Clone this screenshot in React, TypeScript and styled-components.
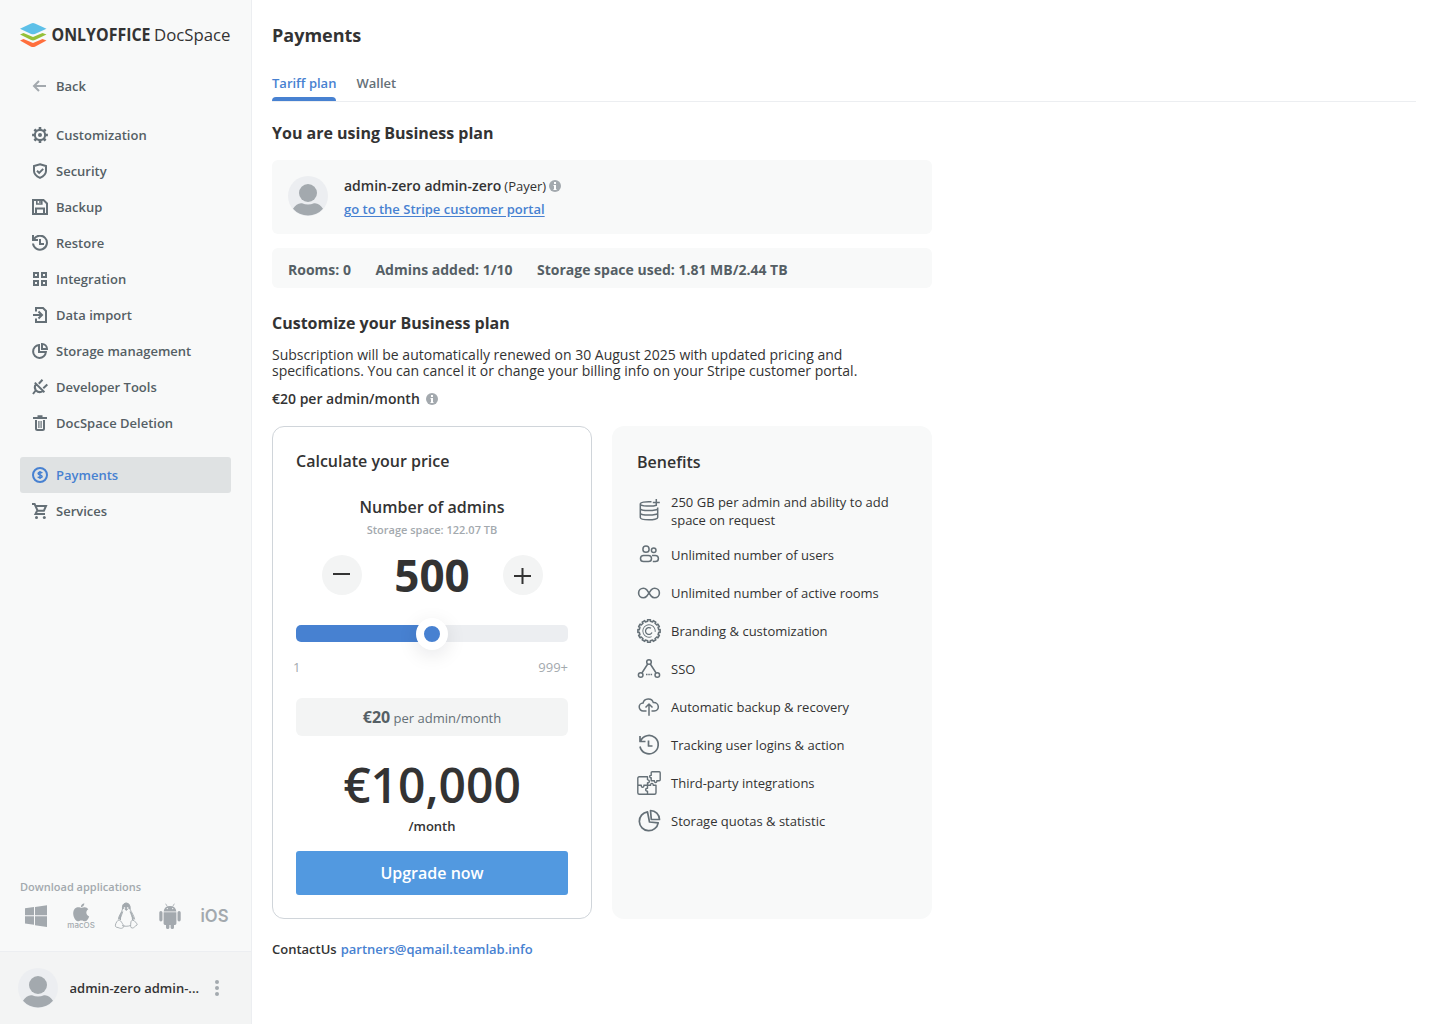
import React from "react";
import styled, { createGlobalStyle } from "styled-components";

const GlobalStyle = createGlobalStyle`
  *, *::before, *::after { box-sizing: border-box; }
  body {
    margin: 0;
    font-family: "Open Sans", sans-serif;
    font-size: 13px;
    color: #333;
    background: #fff;
  }
  h1, h2, h3, p { margin: 0; }
  button { font-family: inherit; border: 0; padding: 0; cursor: pointer; }
  a { color: #4781d1; }
  svg { display: block; flex: none; }
`;

/* ---------- layout ---------- */

const Page = styled.div`
  display: flex;
  width: 100%;
  height: 1024px;
  overflow: hidden;
`;

const Sidebar = styled.aside`
  display: flex;
  flex-direction: column;
  flex: none;
  width: 252px;
  background: #f8f9f9;
  border-right: 1px solid #eceef1;
`;

const LogoLink = styled.div`
  height: 28px;
  margin: 21px 20px 0;
  svg { overflow: visible; }
`;

const Nav = styled.nav`
  display: flex;
  flex-direction: column;
  flex: 1;
  padding: 19px 20px 0;
`;

const NavItem = styled.div<{ $active?: boolean; $before?: number }>`
  display: flex;
  align-items: center;
  gap: 8px;
  height: 36px;
  margin-top: ${(p) => p.$before ?? 0}px;
  padding: 0 12px;
  border-radius: 3px;
  font-weight: 600;
  line-height: 20px;
  color: ${(p) => (p.$active ? "#4781d1" : "#555f65")};
  background: ${(p) => (p.$active ? "#dfe2e3" : "transparent")};
  svg { color: ${(p) => (p.$active ? "#4781d1" : "#657077")}; }
`;

const Downloads = styled.section`
  padding: 0 20px 19px;
  color: #a3a9ae;
`;

const DownloadTitle = styled.div`
  font-size: 11px;
  font-weight: 600;
  line-height: 16px;
`;

const AppRow = styled.div`
  display: flex;
  justify-content: space-between;
  height: 32px;
  margin: 5px 0 0 0;
  align-items: center;
`;

const Profile = styled.footer`
  display: flex;
  align-items: center;
  height: 73px;
  padding: 0 18px;
  border-top: 1px solid #eceef1;
  background: #f3f4f4;
`;

const ProfileName = styled.div`
  width: 131px;
  margin: 0 14.500px 0 11.500px;
  overflow: hidden;
  white-space: nowrap;
  font-weight: 600;
  line-height: 20px;
`;

const Main = styled.main`
  flex: 1;
  padding: 0 24px 0 20px;
`;

const PageTitle = styled.h1`
  margin-top: 23px;
  font-size: 18px;
  font-weight: 700;
  line-height: 24px;
`;

const Tabs = styled.div`
  display: flex;
  gap: 20px;
  height: 33px;
  margin-top: 22px;
  padding-top: 4px;
  border-bottom: 1px solid #eceef1;
`;

const Tab = styled.div<{ $active?: boolean }>`
  height: 28px;
  margin-bottom: -1px;
  display: flex;
  flex-direction: column;
  justify-content: space-between;
  font-weight: 600;
  line-height: 20px;
  color: ${(p) => (p.$active ? "#4781d1" : "#657077")};
  &::after {
    content: "";
    height: 4px;
    border-radius: 4px 4px 0 0;
    background: ${(p) => (p.$active ? "#4781d1" : "transparent")};
  }
`;

const Content = styled.div`
  width: 660px;
`;

const SectionTitle = styled.h2<{ $before: number }>`
  margin-top: ${(p) => p.$before}px;
  font-size: 16px;
  font-weight: 700;
  line-height: 22px;
`;

const PayerCard = styled.section`
  display: flex;
  gap: 16px;
  height: 74px;
  margin-top: 16px;
  padding: 16px;
  border-radius: 6px;
  background: #f8f9f9;
`;

const PayerInfo = styled.div`
  display: flex;
  flex-direction: column;
  gap: 3px;
`;

const PayerLine = styled.div`
  display: flex;
  align-items: center;
  height: 20px;
  line-height: 20px;
  strong { font-size: 14px; font-weight: 600; }
  span { margin-left: 3px; }
  svg { margin-left: 2.500px; }
`;

const PortalLink = styled.a`
  font-weight: 600;
  line-height: 20px;
  text-decoration: underline;
  text-underline-offset: 2px;
`;

const Stats = styled.section`
  display: flex;
  align-items: center;
  gap: 24.500px;
  height: 40px;
  margin-top: 14px;
  padding: 3px 16px 0;
  border-radius: 6px;
  background: #f8f9f9;
  color: #555f65;
  font-size: 14px;
  font-weight: 700;
`;

const Renewal = styled.p`
  margin-top: 13px;
  font-size: 14px;
  line-height: 16px;
`;

const UnitPrice = styled.div`
  display: flex;
  align-items: center;
  gap: 6px;
  height: 20px;
  margin-top: 10px;
  font-size: 14px;
  font-weight: 600;
  line-height: 19px;
  span { height: 20px; }
`;

const Panels = styled.div`
  display: grid;
  grid-template-columns: 320px 320px;
  gap: 20px;
  height: 493px;
  margin-top: 17px;
`;

const Calculator = styled.section`
  display: flex;
  flex-direction: column;
  padding: 23px;
  border: 1px solid #d0d5da;
  border-radius: 12px;
`;

const PanelTitle = styled.h3`
  font-size: 16px;
  font-weight: 600;
  line-height: 22px;
`;

const CounterTitle = styled(PanelTitle)`
  margin-top: 24px;
  text-align: center;
`;

const StorageNote = styled.div`
  margin-top: 4px;
  font-size: 11px;
  font-weight: 600;
  line-height: 16px;
  text-align: center;
  color: #a3a9ae;
`;

const Counter = styled.div`
  display: flex;
  align-items: center;
  justify-content: space-between;
  height: 40px;
  margin-top: 17px;
  padding: 0 25px 0 26px;
`;

const RoundButton = styled.button`
  display: flex;
  align-items: center;
  justify-content: center;
  width: 40px;
  height: 40px;
  border-radius: 50%;
  background: #f3f4f4;
  color: #333;
`;

const Count = styled.div`
  margin-right: 1px;
  font-size: 44px;
  font-weight: 700;
  line-height: 40px;
`;

const Slider = styled.div<{ $fill: number }>`
  display: flex;
  align-items: center;
  justify-content: center;
  height: 17px;
  margin-top: 30px;
  border-radius: 5px;
  background: linear-gradient(to right, #4781d1 ${(p) => p.$fill}%, #eceef1 ${(p) => p.$fill}%);
`;

const Thumb = styled.div`
  flex: none;
  width: 32px;
  height: 32px;
  border: 8px solid #fff;
  border-radius: 50%;
  background: #4781d1;
  box-shadow: 0 5px 20px rgba(4, 15, 27, 0.1);
`;

const Range = styled.div`
  display: flex;
  justify-content: space-between;
  margin: 15px 0 0 -3px;
  line-height: 20px;
  color: #a3a9ae;
`;

const PerAdmin = styled.div`
  height: 38px;
  margin-top: 21px;
  border-radius: 6px;
  background: #f3f4f4;
  text-align: center;
  line-height: 38px;
  color: #657077;
  strong { font-size: 16px; color: #555f65; }
`;

const Total = styled.div`
  margin-top: 17px;
  font-size: 48px;
  font-weight: 600;
  line-height: 64px;
  text-align: center;
`;

const Period = styled.div`
  font-weight: 600;
  line-height: 18px;
  text-align: center;
`;

const UpgradeButton = styled.button`
  height: 44px;
  margin-top: 16px;
  border-radius: 3px;
  background: #5299e0;
  color: #fff;
  font-size: 16px;
  font-weight: 600;
`;

const Benefits = styled.section`
  padding: 25px;
  border-radius: 12px;
  background: #f8f9f9;
`;

const BenefitList = styled.div`
  display: flex;
  flex-direction: column;
  gap: 14px;
  margin-top: 20px;
`;

const Benefit = styled.div`
  display: flex;
  align-items: center;
  gap: 10px;
  min-height: 24px;
  line-height: 18px;
  svg { color: #657077; }
`;

const Contact = styled.div`
  display: flex;
  gap: 4px;
  margin-top: 20px;
  font-weight: 600;
  line-height: 20px;
`;

/* ---------- icons ---------- */

const NavIcon = ({ children }: { children: React.ReactNode }) => (
  <svg width="16" height="16" viewBox="0 0 16 16" fill="none" stroke="currentColor" strokeWidth="2">
    {children}
  </svg>
);

const BenefitIcon = ({ children, width = 1.5 }: { children: React.ReactNode; width?: number }) => (
  <svg width="24" height="24" viewBox="0 0 24 24" fill="none" stroke="currentColor" strokeWidth={width} strokeLinejoin="round">
    {children}
  </svg>
);

const InfoIcon = () => (
  <svg width="12" height="12" viewBox="0 0 12 12">
    <circle cx="6" cy="6" r="6" fill="#a3a9ae" />
    <path d="M5 2h2v2H5zM4.500 5H7v4h.5v1h-3V9H5V6h-.5z" fill="#fff" />
  </svg>
);

const Avatar = () => (
  <svg width="40" height="40" viewBox="0 0 40 40">
    <circle cx="20" cy="20" r="20" fill="#eceef1" />
    <circle cx="20" cy="17" r="9" fill="#a3a9ae" />
    <path d="M5 32.8C7.5 28.8 10.5 26.7 14 27.2c2 .8 4 1.3 6 1.3s4-.5 6-1.3c3.5-.5 6.500 1.600 9 5.600A20 20 0 0 1 5 32.800z" fill="#a3a9ae" />
  </svg>
);

const Logo = () => (
  <svg width="211" height="28" viewBox="0 0 211 28" fontFamily="Open Sans, sans-serif" fill="#333">
    <path d="M0 19.600 3.500 18l9.500 4 9.500-4 4 1.600-11.600 6.100q-1.900.8-3.800 0z" fill="#ff6f3d" />
    <path d="M0 13.600 3.500 12l9.500 4 9.500-4 4 1.600-11.600 5.500q-1.900.8-3.800 0z" fill="#95c038" />
    <path d="m0 7.700 11.100-5.200q1.900-.8 3.800 0L26.500 7.700l-11.600 5.200q-1.900.8-3.800 0z" fill="#5dc0e8" />
    <text x="31.500" y="20" fontSize="17.200" fontWeight="700" textLength="99" lengthAdjust="spacingAndGlyphs">ONLYOFFICE</text>
    <text x="134" y="20" fontSize="17.200" textLength="76.500" lengthAdjust="spacingAndGlyphs">DocSpace</text>
  </svg>
);

const gearPath = (teeth: number, outer: number, inner: number, c: number, base = 0.3, tip = 0.2) => {
  const pts: string[] = [];
  const step = (Math.PI * 2) / teeth;
  for (let i = 0; i < teeth; i++) {
    const a = i * step - Math.PI / 2;
    [[-base, inner], [-tip, outer], [tip, outer], [base, inner]].forEach(([o, r]) =>
      pts.push(`${(c + Math.cos(a + o * step) * r).toFixed(2)} ${(c + Math.sin(a + o * step) * r).toFixed(2)}`)
    );
  }
  return `M${pts.join("L")}Z`;
};

const navGlyphs = {
  back: <g stroke="#a3a9ae"><path d="M2 8h12M7 3 2 8l5 5" /></g>,
  gear: (
    <>
      <path d={gearPath(8, 8, 6.200, 8, 0.28, 0.2) + "M8 3.900a4.100 4.100 0 1 0 0 8.200 4.100 4.100 0 0 0 0-8.200z"} fill="currentColor" fillRule="evenodd" stroke="none" />
      <circle cx="8" cy="8" r="2" fill="currentColor" stroke="none" />
    </>
  ),
  shield: <><path d="M8 1.200 14 3v5c0 3-2.500 5.300-6 6.900C4.500 13.300 2 11 2 8V3z" /><path d="m5 7.700 2.200 2.200 4-4" /></>,
  floppy: <><path d="M1 1h10.500L15 4.500V15H1zM4 15V9.500h8V15" /><path d="M4.800 1v4h5V1M8 1v3" strokeWidth="1.600" /></>,
  history: <><path d="M1.800 4.300A7 7 0 1 1 1 8.500" /><path d="M1 0v5h5M8 4v5h4" /></>,
  grid: <path d="M2 2h4v4H2zM10 2h4v4h-4zM2 10h4v4H2zM10 10h4v4h-4z" />,
  dataImport: <><path d="M4 4.500V1h7l3 3v11H4v-3.500" /><path d="M1 8h8M6.500 4.500 10 8l-3.500 3.500" /></>,
  pie: <><path d="M7 2.100A6.400 6.400 0 1 0 13.900 9H7z" /><path d="M10 1v5h5A5 5 0 0 0 10 1z" /></>,
  plug: <><path d="m2.800 3.600 9.600 9.600M4 5c-1.700 2.300-1.600 4.200-.2 6.200C5.800 13.200 8.500 13.700 11 12M4 11l-3 4M6.800 4.800l3.700-4M11.300 9.300l4-3.800" /></>,
  trash: (
    <>
      <path d="M1 3h14M5.500 1.300h5M4 5v8.500Q4 15 5.500 15h5q1.500 0 1.500-1.500V5" />
      <path d="M6.900 6v7M9.100 6v7" strokeWidth="1.200" />
    </>
  ),
  dollar: (
    <>
      <circle cx="8" cy="8" r="7" />
      <path d="M10.200 6.100C9.800 5.200 6.100 4.800 6.100 6.600c0 1.700 4 1 4 2.800 0 1.900-3.900 1.400-4.300.3M8 4v8" strokeWidth="1.500" />
    </>
  ),
  cart: (
    <>
      <path d="M0 1h2.600l3 6.700h6.300L14 3H3.800M5 8l-1.500 3H13" />
      <circle cx="4.500" cy="14.500" r="1.500" fill="currentColor" stroke="none" />
      <circle cx="12.300" cy="14.500" r="1.500" fill="currentColor" stroke="none" />
    </>
  ),
};

const navItems: { label: string; icon: keyof typeof navGlyphs; active?: boolean; before?: number }[] = [
  { label: "Back", icon: "back" },
  { label: "Customization", icon: "gear", before: 13 },
  { label: "Security", icon: "shield" },
  { label: "Backup", icon: "floppy" },
  { label: "Restore", icon: "history" },
  { label: "Integration", icon: "grid" },
  { label: "Data import", icon: "dataImport" },
  { label: "Storage management", icon: "pie" },
  { label: "Developer Tools", icon: "plug" },
  { label: "DocSpace Deletion", icon: "trash" },
  { label: "Payments", icon: "dollar", active: true, before: 16 },
  { label: "Services", icon: "cart" },
];

const benefits: { text: string; icon: React.ReactNode }[] = [
  {
    text: "250 GB per admin and ability to add space on request",
    icon: (
      <BenefitIcon>
        <path d="M14.500 2.800C8 2.400 3.300 3.400 3.300 4.900c0 2.400 12 2.800 16 1.300M3.300 4.900v13.600c0 3 17.400 3 17.400 0V8.500M3.300 9.500c0 2.800 17.400 2.800 17.400 0M3.300 14c0 2.800 17.400 2.800 17.400 0M19.300 0v7M15.800 3.500h7" />
      </BenefitIcon>
    ),
  },
  {
    text: "Unlimited number of users",
    icon: (
      <BenefitIcon>
        <circle cx="9" cy="6.200" r="3.100" />
        <circle cx="16.700" cy="7.200" r="2.300" />
        <rect x="3.500" y="12.400" width="11" height="6.200" rx="3.100" />
        <path d="M15 12.400h3.300a3.100 3.100 0 0 1 0 6.200h-2.500" />
      </BenefitIcon>
    ),
  },
  {
    text: "Unlimited number of active rooms",
    icon: (
      <BenefitIcon width={1.6}>
        <path d="M12 12 9.800 8.900C8.700 7.700 7.700 7.200 6.400 7.200a4.800 4.800 0 0 0 0 9.600c1.300 0 2.300-.5 3.400-1.700l4.400-6.200c1.100-1.200 2.100-1.700 3.400-1.700a4.800 4.800 0 0 1 0 9.600c-1.300 0-2.300-.5-3.400-1.700z" />
      </BenefitIcon>
    ),
  },
  {
    text: "Branding & customization",
    icon: (
      <BenefitIcon width={1.5}>
        <path d={gearPath(12, 11.250, 9.800, 12, 0.25, 0.25)} />
        <circle cx="12" cy="12" r="6.200" strokeWidth=".9" strokeDasharray="32 7" transform="rotate(65 12 12)" />
        <path d="M14 9.300a3.400 3.400 0 1 0 1 4.200" strokeWidth="1.300" />
      </BenefitIcon>
    ),
  },
  {
    text: "SSO",
    icon: (
      <BenefitIcon>
        <circle cx="12" cy="5" r="2.300" />
        <circle cx="3.700" cy="18" r="2.300" />
        <circle cx="20.300" cy="18" r="2.300" />
        <path d="m10.700 7-5.800 9M13.300 7l5.800 9" />
        <path d="M9 17.500h1.500M11.300 17.500h1.500M13.600 17.500h1.500" strokeWidth="1.700" />
      </BenefitIcon>
    ),
  },
  {
    text: "Automatic backup & recovery",
    icon: (
      <BenefitIcon>
        <path d="M9.500 16H6.300a4 4 0 0 1-.2-8C7 2.900 15 2.300 16.300 7.600c6.300-.4 6.800 8.400.8 8.400h-2.600M12 20.800V9.300M8.500 12.500 12 9l3.500 3.500" />
      </BenefitIcon>
    ),
  },
  {
    text: "Tracking user logins & action",
    icon: (
      <BenefitIcon width={1.700}>
        <path d="M3.500 8.200A9.200 9.200 0 1 1 3 13.500M3 3v5.500h5.500M11.500 7.500V13h4" />
      </BenefitIcon>
    ),
  },
  {
    text: "Third-party integrations",
    icon: (
      <BenefitIcon width={1.400}>
        <path d="M14.200 3.200V1.700q0-1 1-1h7q1 0 1 1v7.100q0 1-1 1h-2.400c.3 2.200-2.700 2.200-2.400 0h-3.200V6.700c-2 .3-2-2.700 0-2.300z" />
        <path d="M10.500 9V5.800H2.300q-1.500 0-1.500 1.500v14.500q0 1.500 1.500 1.500H17.500q1.500 0 1.500-1.500V14.300h-2.800c.4-2.600-3-2.600-2.600 0h-3.100v-2.500c2.400.4 2.400-3.200 0-2.800" />
        <path d="M1 14.300h3.300c-.4 2.500 3 2.500 2.600 0h3.600v3c-2.400-.4-2.400 3.200 0 2.800v3.200" />
      </BenefitIcon>
    ),
  },
  {
    text: "Storage quotas & statistic",
    icon: (
      <BenefitIcon width={1.700}>
        <path d="M10.500 2.800a9.500 9.500 0 1 0 10.700 11L12.500 13z" />
        <path d="M13.500 1.500 14.300 10.500H22.500A9.200 9.200 0 0 0 13.500 1.500z" />
      </BenefitIcon>
    ),
  },
];

const DesktopApps = () => (
  <AppRow>
    <svg width="32" height="32" viewBox="0 0 32 32" fill="#a3a9ae">
      <path d="m5 8.300 9-1.300v8.300H5zM15 6.900 27 5.200v10.100H15zM5 16.300h9v8.400l-9-1.200zM15 16.300h12V27l-12-1.800z" />
    </svg>
    <svg width="32" height="32" viewBox="0 0 32 32" fill="#a3a9ae">
      <path d="M19.300 3.300c.2 2-1.600 4-3.400 3.900-.2-1.900 1.600-3.700 3.400-3.900zM23.300 9.200c-3 1.900-2.400 5.900.9 7.200-.8 2.200-2.400 4.900-4.100 4.900-1.500 0-2-.8-3.700-.8s-2.300.8-3.700.8c-2 0-4.500-4.300-4.500-7.700 0-6.200 4.500-6.900 6.100-6.300 2.600.9 2.500.7 4.700 0 1.700-.4 3.300.5 4.300 1.900z" />
      <text x="2.300" y="27.500" fontSize="7.500" fontFamily="Inter, sans-serif" fontWeight="500" textLength="27.500" lengthAdjust="spacingAndGlyphs">macOS</text>
    </svg>
    <svg width="32" height="32" viewBox="0 0 32 32" fill="none" stroke="#a3a9ae" strokeWidth=".9">
      <path d="M12.500 9C12 5 13.700 3.200 16.200 3.200S20.300 5 20 9c1.500 3.500 4 6.500 4.700 10.500M12.500 9C11.700 13 9 14.500 8.300 19.500M12.800 11.500C12 15 10 17 10.500 20M20 11.500c1 3 2.500 5 2.500 8.500M12 25.500c2 1 6 1 8.500 0" />
      <path d="M8.300 20.200c2.500-.7 3.500 3 5.500 5.300.2 3-3 3.200-4.500 2.500-1.700-.8-3.300-.5-3.800-1.500-.5-1.500.5-4.500 2.800-6.300zM24 20.500c-2.200-.5-3 0-3.200 2.500-.2 2.500-.8 5 1.500 5 2 0 2.200-1.700 4.700-3 .8-.8-.9-2.200-3-4.500z" />
      <path d="M12.500 9c0-4 1-5.800 3.800-5.800S20.200 5.500 20 9l-1.500-.8-2.200 2.300-2.200-2.300zM12 11.500 9 18l1.500 2M20.500 11.500l3.200 7-1 1.500" fill="#a3a9ae" />
      <path d="M13.800 7.200h1.400v1.500h-1.400zM16.900 7.200h1.500v1.500h-1.500z" fill="#f8f9f9" stroke="none" />
    </svg>
    <svg width="32" height="32" viewBox="0 0 32 32" fill="#a3a9ae">
      <path d="M9.600 11.400a6.500 6.500 0 0 1 12.800 0zM9.600 12.200h12.800v11.300q0 1.400-1.400 1.400h-1v2.500a1.700 1.700 0 0 1-3.400 0v-2.500h-1.200v2.500a1.700 1.700 0 0 1-3.400 0v-2.500h-1q-1.400 0-1.400-1.400z" />
      <path d="M6.900 12.600v7.200M25.100 12.600v7.200" stroke="#a3a9ae" strokeWidth="3.200" strokeLinecap="round" />
      <path d="m13.200 6.300-1.600-2.600M18.800 6.300l1.600-2.600" stroke="#a3a9ae" strokeWidth=".8" />
      <circle cx="13.300" cy="8.600" r=".7" fill="#f8f9f9" />
      <circle cx="18.700" cy="8.600" r=".7" fill="#f8f9f9" />
    </svg>
    <svg width="32" height="32" viewBox="0 0 32 32" fill="#a3a9ae">
      <text x="1.500" y="22.300" fontSize="17.500" fontFamily="Inter, sans-serif" fontWeight="600" textLength="28" lengthAdjust="spacingAndGlyphs">iOS</text>
    </svg>
  </AppRow>
);

/* ---------- page ---------- */

export default function App() {
  return (
    <Page>
      <GlobalStyle />
      <Sidebar>
        <LogoLink><Logo /></LogoLink>
        <Nav>
          {navItems.map((item) => (
            <NavItem key={item.label} $active={item.active} $before={item.before}>
              <NavIcon>{navGlyphs[item.icon]}</NavIcon>
              {item.label}
            </NavItem>
          ))}
        </Nav>
        <Downloads>
          <DownloadTitle>Download applications</DownloadTitle>
          <DesktopApps />
        </Downloads>
        <Profile>
          <Avatar />
          <ProfileName>admin-zero admin-...</ProfileName>
          <svg width="4" height="16" viewBox="0 0 4 16" fill="#a3a9ae">
            <circle cx="2" cy="2" r="2" />
            <circle cx="2" cy="8" r="2" />
            <circle cx="2" cy="14" r="2" />
          </svg>
        </Profile>
      </Sidebar>
      <Main>
        <PageTitle>Payments</PageTitle>
        <Tabs>
          <Tab $active>Tariff plan</Tab>
          <Tab>Wallet</Tab>
        </Tabs>
        <Content>
          <SectionTitle $before={20}>You are using Business plan</SectionTitle>
          <PayerCard>
            <Avatar />
            <PayerInfo>
              <PayerLine><strong>admin-zero admin-zero</strong><span>(Payer)</span><InfoIcon /></PayerLine>
              <PortalLink>go to the Stripe customer portal</PortalLink>
            </PayerInfo>
          </PayerCard>
          <Stats>
            <span>Rooms: 0</span>
            <span>Admins added: 1/10</span>
            <span>Storage space used: 1.81 MB/2.44 TB</span>
          </Stats>
          <SectionTitle $before={24}>Customize your Business plan</SectionTitle>
          <Renewal>
            Subscription will be automatically renewed on 30 August 2025 with updated pricing and
            specifications. You can cancel it or change your billing info on your Stripe customer portal.
          </Renewal>
          <UnitPrice><span>€20 per admin/month</span><InfoIcon /></UnitPrice>
          <Panels>
            <Calculator>
              <PanelTitle>Calculate your price</PanelTitle>
              <CounterTitle>Number of admins</CounterTitle>
              <StorageNote>Storage space: 122.07 TB</StorageNote>
              <Counter>
                <RoundButton aria-label="Remove admin">
                  <svg width="18" height="18" viewBox="0 0 18 18" stroke="currentColor" strokeWidth="2"><path d="M0 8h17" /></svg>
                </RoundButton>
                <Count>500</Count>
                <RoundButton aria-label="Add admin">
                  <svg width="18" height="18" viewBox="0 0 18 18" stroke="currentColor" strokeWidth="2"><path d="M0 10h17M8.500 2v16" /></svg>
                </RoundButton>
              </Counter>
              <Slider $fill={50}><Thumb /></Slider>
              <Range><span>1</span><span>999+</span></Range>
              <PerAdmin><strong>€20</strong> per admin/month</PerAdmin>
              <Total>€10,000</Total>
              <Period>/month</Period>
              <UpgradeButton>Upgrade now</UpgradeButton>
            </Calculator>
            <Benefits>
              <PanelTitle>Benefits</PanelTitle>
              <BenefitList>
                {benefits.map((b) => (
                  <Benefit key={b.text}>{b.icon}<span>{b.text}</span></Benefit>
                ))}
              </BenefitList>
            </Benefits>
          </Panels>
          <Contact><span>ContactUs</span><a>partners@qamail.teamlab.info</a></Contact>
        </Content>
      </Main>
    </Page>
  );
}
